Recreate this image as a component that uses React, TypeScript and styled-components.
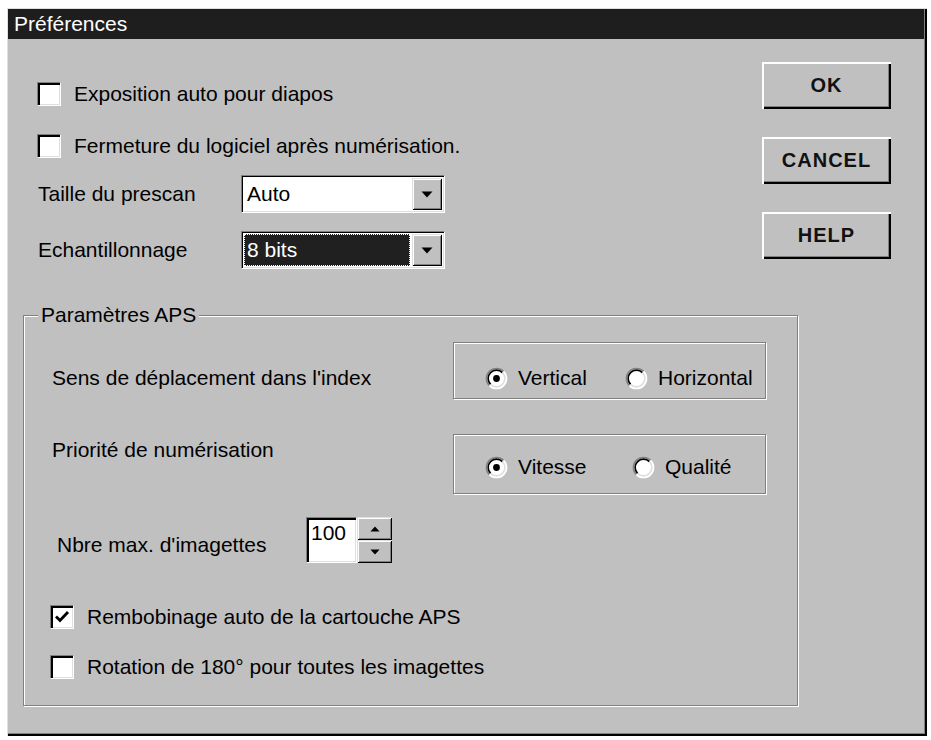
import React from 'react'
import styled, { createGlobalStyle } from 'styled-components'

const GlobalStyle = createGlobalStyle`
  body {
    margin: 0;
    background: #ffffff;
    font-family: "Liberation Sans", Arial, sans-serif;
    color: #000;
  }
`

const Window = styled.div`
  margin: 8px 0 0 7px;
  width: 920px;
  height: 728px;
  box-sizing: border-box;
  background: #c0c0c0;
  padding: 1px 3px 3px 1px;
  box-shadow: inset 1px 1px 0 #dfdfdf, inset -1px -1px 0 #000, inset -2px -2px 0 #000,
    inset -3px -3px 0 #808080;
  display: flex;
  flex-direction: column;
`

const TitleBar = styled.div`
  height: 30px;
  line-height: 30px;
  background: #1e1e1e;
  color: #fff;
  font-size: 21px;
  padding-left: 6px;
`

const TopSection = styled.div`
  display: flex;
  justify-content: space-between;
`

const LeftCol = styled.div`
  padding: 29px 0 0 29px;
  display: flex;
  flex-direction: column;
`

const ButtonCol = styled.div`
  padding: 23px 33px 0 0;
  display: flex;
  flex-direction: column;
  gap: 28px;
`

const PushButton = styled.button`
  width: 129px;
  height: 47px;
  border: none;
  background: #c0c0c0;
  font-family: "Liberation Sans", Arial, sans-serif;
  font-weight: bold;
  font-size: 20px;
  letter-spacing: 1px;
  color: #111;
  padding: 0;
  box-shadow: inset 2px 2px 0 #fff, inset -2px -2px 0 #000, inset -3px -3px 0 #808080;
`

const CheckRow = styled.label<{ $h: number; $mt?: number; $ml?: number }>`
  display: flex;
  align-items: center;
  gap: 13px;
  height: ${p => p.$h}px;
  margin-top: ${p => p.$mt || 0}px;
  margin-left: ${p => p.$ml || 0}px;
  font-size: 21px;
`

const Box = styled.span`
  width: 24px;
  height: 24px;
  box-sizing: border-box;
  background: #fff;
  border-top: 1px solid #808080;
  border-left: 1px solid #808080;
  border-bottom: 1px solid #fff;
  border-right: 1px solid #fff;
  box-shadow: inset 1px 1px 0 #000, inset 2px 2px 0 #000, inset -1px -1px 0 #dfdfdf;
  display: flex;
  align-items: center;
  justify-content: center;
`

const SelectRow = styled.div<{ $mt: number }>`
  display: flex;
  align-items: center;
  height: 38px;
  margin-top: ${p => p.$mt}px;
`

const FieldLabel = styled.span<{ $w: number; $pl?: number; $pt?: number }>`
  width: ${p => p.$w}px;
  padding-left: ${p => p.$pl || 0}px;
  padding-top: ${p => p.$pt || 0}px;
  box-sizing: border-box;
  font-size: 21px;
  line-height: 24px;
  flex-shrink: 0;
`

const Combo = styled.div`
  width: 204px;
  height: 38px;
  box-sizing: border-box;
  background: #fff;
  border-top: 1px solid #808080;
  border-left: 1px solid #808080;
  border-bottom: 1px solid #fff;
  border-right: 1px solid #fff;
  box-shadow: inset 1px 1px 0 #000, inset -1px -1px 0 #dfdfdf;
  padding: 2px;
  display: flex;
`

const ComboValue = styled.div<{ $selected?: boolean }>`
  flex: 1;
  display: flex;
  align-items: center;
  padding-left: 2px;
  margin-right: 2px;
  font-size: 21px;
  background: ${p => (p.$selected ? '#202020' : 'transparent')};
  color: ${p => (p.$selected ? '#fff' : '#000')};
  border: 1px dotted ${p => (p.$selected ? '#fff' : 'transparent')};
`

const BevelButton = styled.div<{ $w: number; $h?: number }>`
  width: ${p => p.$w}px;
  height: ${p => (p.$h ? `${p.$h}px` : 'auto')};
  box-sizing: border-box;
  background: #c0c0c0;
  box-shadow: inset 1px 1px 0 #dfdfdf, inset -1px -1px 0 #000, inset 2px 2px 0 #fff,
    inset -2px -2px 0 #808080;
  display: flex;
  align-items: center;
  justify-content: center;
`

const GroupBox = styled.fieldset`
  margin: 34px 0 0 15px;
  width: 775px;
  height: 403px;
  box-sizing: border-box;
  padding: 0;
  border: 1px solid #808080;
  box-shadow: 1px 1px 0 #fff, inset 1px 1px 0 #fff;
  min-width: 0;
`

const GroupCaption = styled.legend`
  margin-left: 14px;
  padding: 0 3px;
  font-size: 21px;
  line-height: 24px;
  background: #c0c0c0;
`

const GroupContent = styled.div`
  padding: 15px 0 0 28px;
  display: flex;
  flex-direction: column;
`

const OptionRow = styled.div<{ $mt?: number }>`
  display: flex;
  align-items: flex-start;
  margin-top: ${p => p.$mt || 0}px;
`

const RadioFrame = styled.div<{ $h: number; $pt: number }>`
  width: 313px;
  height: ${p => p.$h}px;
  box-sizing: border-box;
  border: 1px solid #808080;
  box-shadow: 1px 1px 0 #fff, inset 1px 1px 0 #fff;
  padding: ${p => p.$pt}px 0 0 31px;
  display: flex;
`

const RadioItem = styled.label<{ $w?: number }>`
  display: flex;
  align-items: center;
  gap: 10px;
  height: 24px;
  width: ${p => (p.$w ? `${p.$w}px` : 'auto')};
  font-size: 21px;
`

const SpinRow = styled.div`
  display: flex;
  align-items: flex-start;
  margin-top: 23px;
  height: 46px;
`

const SpinInput = styled.div`
  width: 51px;
  height: 46px;
  box-sizing: border-box;
  background: #fff;
  border-top: 1px solid #808080;
  border-left: 1px solid #808080;
  border-bottom: 1px solid #fff;
  border-right: 1px solid #fff;
  box-shadow: inset 1px 1px 0 #000, inset 2px 2px 0 #000, inset -1px -1px 0 #dfdfdf;
  padding: 3px 0 0 4px;
  font-size: 21px;
  line-height: 24px;
`

const SpinButtons = styled.div`
  display: flex;
  flex-direction: column;
`

const Arrow = ({ up, size = 12 }: { up?: boolean; size?: number }) => (
  <svg width={size} height={size / 2 + 1} viewBox="0 0 12 7">
    {up ? <path d="M6 0.5 L11.5 6.5 L0.5 6.5 Z" fill="#000" /> : <path d="M0.5 0.5 L11.5 0.5 L6 6.5 Z" fill="#000" />}
  </svg>
)

const Radio = ({ checked }: { checked?: boolean }) => (
  <svg width="23" height="23" viewBox="0 0 23 23">
    <circle cx="11.5" cy="11.5" r="10" fill="#fff" />
    <path d="M4.4 18.6 A10 10 0 0 1 18.6 4.4" stroke="#808080" strokeWidth="1.6" fill="none" />
    <path d="M5.6 17.4 A8.3 8.3 0 0 1 17.4 5.6" stroke="#000" strokeWidth="1.6" fill="none" />
    <path d="M18.6 4.4 A10 10 0 0 1 4.4 18.6" stroke="#fff" strokeWidth="1.6" fill="none" />
    <path d="M17.4 5.6 A8.3 8.3 0 0 1 5.6 17.4" stroke="#dfdfdf" strokeWidth="1.6" fill="none" />
    {checked && <circle cx="11.5" cy="11.5" r="3.4" fill="#000" />}
  </svg>
)

const CheckBox = ({ checked }: { checked?: boolean }) => (
  <Box>
    {checked && (
      <svg width="16" height="14" viewBox="0 0 16 14">
        <path d="M2 6.5 L6 10.5 L14 2" stroke="#000" strokeWidth="2.8" fill="none" />
      </svg>
    )}
  </Box>
)

const ComboBox = ({ value, selected }: { value: string; selected?: boolean }) => (
  <Combo>
    <ComboValue $selected={selected}>{value}</ComboValue>
    <BevelButton $w={30}>
      <Arrow />
    </BevelButton>
  </Combo>
)

export default function App() {
  return (
    <>
      <GlobalStyle />
      <Window>
        <TitleBar>Préférences</TitleBar>
        <TopSection>
          <LeftCol>
            <CheckRow $h={52}>
              <CheckBox />
              Exposition auto pour diapos
            </CheckRow>
            <CheckRow $h={52}>
              <CheckBox />
              Fermeture du logiciel après numérisation.
            </CheckRow>
            <SelectRow $mt={3}>
              <FieldLabel $w={204} $pl={1}>Taille du prescan</FieldLabel>
              <ComboBox value="Auto" />
            </SelectRow>
            <SelectRow $mt={18}>
              <FieldLabel $w={204} $pl={1}>Echantillonnage</FieldLabel>
              <ComboBox value="8 bits" selected />
            </SelectRow>
          </LeftCol>
          <ButtonCol>
            <PushButton type="button">OK</PushButton>
            <PushButton type="button">CANCEL</PushButton>
            <PushButton type="button">HELP</PushButton>
          </ButtonCol>
        </TopSection>

        <GroupBox>
          <GroupCaption>Paramètres APS</GroupCaption>
          <GroupContent>
            <OptionRow>
              <FieldLabel $w={401} $pt={24}>Sens de déplacement dans l'index</FieldLabel>
              <RadioFrame $h={57} $pt={23}>
                <RadioItem $w={140}>
                  <Radio checked />
                  Vertical
                </RadioItem>
                <RadioItem>
                  <Radio />
                  Horizontal
                </RadioItem>
              </RadioFrame>
            </OptionRow>
            <OptionRow $mt={35}>
              <FieldLabel $w={401} $pt={4}>Priorité de numérisation</FieldLabel>
              <RadioFrame $h={60} $pt={20}>
                <RadioItem $w={147}>
                  <Radio checked />
                  Vitesse
                </RadioItem>
                <RadioItem>
                  <Radio />
                  Qualité
                </RadioItem>
              </RadioFrame>
            </OptionRow>
            <SpinRow>
              <FieldLabel $w={254} $pl={5} $pt={16}>Nbre max. d'imagettes</FieldLabel>
              <SpinInput>100</SpinInput>
              <SpinButtons>
                <BevelButton $w={35} $h={23}>
                  <Arrow up size={10} />
                </BevelButton>
                <BevelButton $w={35} $h={23}>
                  <Arrow size={10} />
                </BevelButton>
              </SpinButtons>
            </SpinRow>
            <CheckRow $h={30} $mt={39} $ml={-2}>
              <CheckBox checked />
              Rembobinage auto de la cartouche APS
            </CheckRow>
            <CheckRow $h={30} $mt={20} $ml={-2}>
              <CheckBox />
              Rotation de 180° pour toutes les imagettes
            </CheckRow>
          </GroupContent>
        </GroupBox>
      </Window>
    </>
  )
}
